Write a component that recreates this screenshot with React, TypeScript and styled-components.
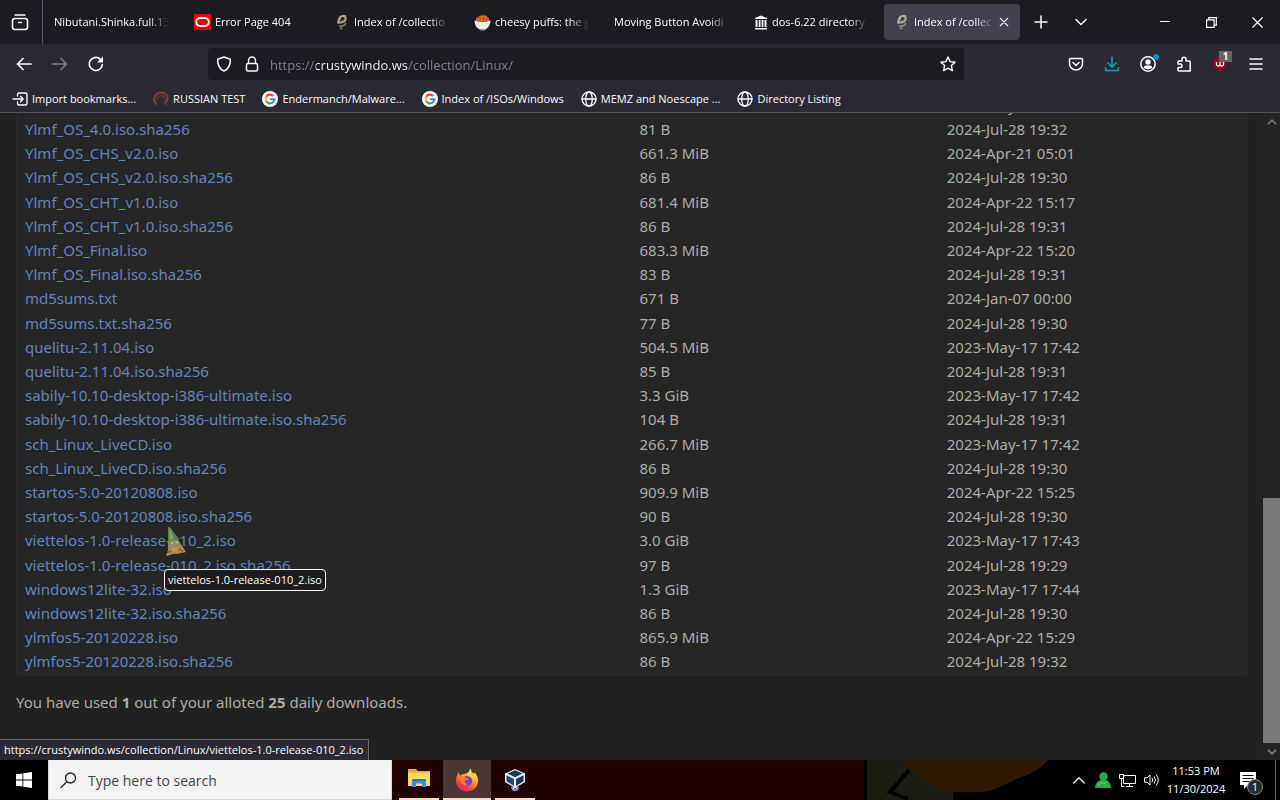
import React from "react";
import styled, { createGlobalStyle, css } from "styled-components";

const GlobalStyle = createGlobalStyle`
  * { box-sizing: border-box; }
  body {
    margin: 0;
    background: #212121;
    font-family: "Open Sans", "Noto Sans", sans-serif;
    font-size: 11px;
    color: #fbfbfe;
  }
  button {
    font: inherit;
    color: inherit;
    background: none;
    border: 0;
    padding: 0;
    margin: 0;
  }
  svg { display: block; flex: none; }
`;

const Desktop = styled.div`
  display: flex;
  flex-direction: column;
  height: 100vh;
  min-height: 400px;
`;

/* ---------- Browser chrome ---------- */

const TabBar = styled.header`
  flex: none;
  display: flex;
  height: 44px;
  background: #1c1b22;
`;

const FirefoxView = styled.button`
  width: 43px;
  display: grid;
  place-items: center;
  border-right: 1px solid #55545e;
  padding-right: 2px;
`;

const TabList = styled.nav`
  display: flex;
  flex: 0 1 auto;
  min-width: 0;
  gap: 4px;
  padding: 4px 1px;
`;

const Tab = styled.button<{ $active?: boolean }>`
  flex: 0 1 136px;
  width: 136px;
  min-width: 0;
  display: flex;
  align-items: center;
  gap: 4px;
  padding: 0 11px 0 10px;
  border-radius: 4px;
  text-align: left;
  ${(p) => p.$active && css`
    background: #42414d;
  `}
`;

const TabTitle = styled.span`
  flex: 1;
  min-width: 0;
  overflow: hidden;
  white-space: nowrap;
  line-height: 20px;
  mask-image: linear-gradient(to left, transparent, #000 20px);
`;

const ChromeButton = styled.button`
  width: 40px;
  display: grid;
  place-items: center;
`;

const WindowButtons = styled.div`
  display: flex;
  margin-left: auto;
`;

const WindowButton = styled.button`
  width: 46px;
  display: grid;
  place-items: center;
`;

const NavBar = styled.div`
  flex: none;
  display: flex;
  align-items: center;
  height: 40px;
  padding: 0 6px;
  background: #2b2a33;
`;

const ToolButton = styled.button<{ $dim?: boolean }>`
  position: relative;
  flex: none;
  width: 36px;
  height: 32px;
  display: grid;
  place-items: center;
  opacity: ${(p) => (p.$dim ? 0.4 : 1)};
`;

const Spring = styled.div`
  flex: 1 1 0;
`;

const UrlBar = styled.div`
  flex: 8 1 0;
  min-width: 0;
  display: flex;
  align-items: center;
  height: 32px;
  padding: 0 2px;
  border-radius: 4px;
  background: #1c1b22;
`;

const UrlIcon = styled.button`
  flex: none;
  width: 28px;
  height: 28px;
  display: grid;
  place-items: center;
`;

const UrlInput = styled.input`
  flex: 1;
  min-width: 0;
  height: 28px;
  margin-left: 4px;
  padding: 2px 0 0;
  border: 0;
  outline: 0;
  font: 13px "Open Sans", "Noto Sans", sans-serif;
  color: transparent;
  background: linear-gradient(to right, #85848c 46px, #fbfbfe 46px, #fbfbfe 138px, #85848c 138px);
  background-clip: text;
`;

const AccountDot = styled.span`
  position: absolute;
  top: 6px;
  right: 7px;
  width: 6px;
  height: 6px;
  border-radius: 50%;
  background: #0090d0;
`;

const BlockCount = styled.span`
  position: absolute;
  top: 3px;
  right: 6px;
  width: 13px;
  height: 11px;
  line-height: 11px;
  text-align: center;
  font-size: 10px;
  font-weight: 700;
  color: #fff;
  background: #666;
`;

const BookmarkBar = styled.nav`
  flex: none;
  display: flex;
  align-items: center;
  gap: 17px;
  height: 29px;
  padding: 2px 12px 0;
  border-bottom: 1px solid #52525e;
  background: #2b2a33;
`;

const Bookmark = styled.a`
  display: flex;
  align-items: center;
  gap: 4px;
  line-height: 20px;
  white-space: nowrap;
  color: inherit;
  text-decoration: none;
`;

/* ---------- Page ---------- */

const Viewport = styled.main`
  position: relative;
  flex: 1;
  min-height: 0;
  display: flex;
  background: #212121;
  font-family: "Noto Sans", "Open Sans", sans-serif;
`;

const Page = styled.div`
  flex: 1;
  min-width: 0;
  display: flex;
  flex-direction: column;
  justify-content: flex-end;
  overflow: hidden;
  padding: 0 16px 46px;
  font-size: 15px;
  color: #b0aca6;
`;

const Listing = styled.table`
  width: 100%;
  table-layout: fixed;
  border-collapse: separate;
  border-spacing: 0;
  border: 1px solid #2b2b2b;
  border-top: 0;
  background: #262626;
`;

const Row = styled.tr`
  height: 24px;
  line-height: 24px;
  &:nth-child(5n + 4) { height: 25px; }
`;

const Cell = styled.td<{ $wide?: boolean }>`
  width: ${(p) => (p.$wide ? "50%" : "25%")};
  padding: 0 8px;
  vertical-align: top;
  white-space: nowrap;
`;

const FileLink = styled.a`
  color: #6284bc;
  text-decoration: none;
`;

const Quota = styled.p`
  margin: 15px 0 0;
  line-height: 24px;
  strong { font-weight: 700; }
`;

const ScrollBar = styled.div`
  flex: none;
  width: 17px;
  display: flex;
  flex-direction: column;
  background: #232323;
`;

const ScrollArrow = styled.button`
  flex: none;
  height: 17px;
  display: grid;
  place-items: center;
  color: #777;
`;

const ScrollTrack = styled.div`
  flex: 1;
  display: flex;
  flex-direction: column;
  justify-content: flex-end;
`;

const ScrollThumb = styled.div`
  height: 40%;
  background: #787878;
`;

const StatusPanel = styled.div`
  position: absolute;
  left: 0;
  bottom: 0;
  height: 21px;
  padding: 0 5px 0 4px;
  line-height: 20px;
  font-family: "Open Sans", sans-serif;
  white-space: nowrap;
  border: 1px solid #6a6a70;
  border-width: 1px 1px 0 0;
  background: #2b2a33;
`;

const HoverAnchor = styled.span`
  position: relative;
`;

const Pointer = styled.svg`
  position: absolute;
  left: 140px;
  top: -3px;
`;

const Tooltip = styled.span`
  position: absolute;
  z-index: 1;
  left: 139px;
  top: 39px;
  height: 22px;
  padding: 0 3px;
  line-height: 20px;
  font-family: "Open Sans", sans-serif;
  font-size: 11px;
  color: #fff;
  white-space: nowrap;
  border: 1px solid #fff;
  border-radius: 4px;
  background: #1c1c1f;
`;

/* ---------- Taskbar ---------- */

const Taskbar = styled.footer`
  position: relative;
  flex: none;
  display: flex;
  height: 40px;
  background: #000;
  overflow: hidden;
`;

const StartButton = styled.button`
  flex: none;
  width: 48px;
  display: grid;
  place-items: center;
  background: #000;
`;

const SearchBox = styled.label`
  flex: 0 1 344px;
  display: flex;
  align-items: center;
  gap: 11px;
  padding: 0 11px;
  border: 1px solid #d8d6d6;
  border-top-color: #f3f2f2;
  background: #f3f2f2;
`;

const SearchInput = styled.input`
  flex: 1;
  min-width: 0;
  padding: 0;
  border: 0;
  outline: 0;
  background: none;
  font: 14px "Open Sans", "Noto Sans", sans-serif;
  color: #333;
  &::placeholder { color: #444; opacity: 1; }
`;

const Wallpaper = styled.div`
  flex: 1 1 0;
  min-width: 0;
  display: flex;
  background: #000;
`;

const AppStrip = styled.div`
  flex: 1;
  display: flex;
  padding-left: 3px;
  background: #200200;
`;

const AppButton = styled.button<{ $active?: boolean }>`
  flex: none;
  width: 48px;
  display: flex;
  flex-direction: column;
  align-items: center;
  justify-content: space-between;
  padding-top: 8px;
  background: ${(p) => (p.$active ? "#4a3635" : "transparent")};
  &::after {
    content: "";
    width: ${(p) => (p.$active ? "48px" : "40px")};
    height: 2px;
    background: #ffdcb8;
  }
`;

const WallpaperArt = styled.svg`
  flex: none;
`;

const Tray = styled.div`
  flex: none;
  display: flex;
  align-items: center;
  padding-right: 4px;
`;

const TrayButton = styled.button`
  width: 24px;
  height: 40px;
  display: grid;
  place-items: center;
`;

const Clock = styled.div`
  width: 66px;
  text-align: center;
  line-height: 18px;
  color: #fff;
`;

const ActionCenter = styled.button`
  position: relative;
  width: 47px;
  height: 40px;
  padding-left: 11px;
  display: flex;
  align-items: center;
  border-right: 1px solid #6a6a6a;
`;

const NoticeCount = styled.span`
  position: absolute;
  left: 18px;
  top: 19px;
  width: 16px;
  height: 16px;
  line-height: 14px;
  text-align: center;
  color: #fff;
  border: 1px solid #8a8a8a;
  border-radius: 50%;
  background: #2a2a2a;
`;

/* ---------- Icons ---------- */

const Stroke = ({ size = 16, width = 1.5, color = "currentColor", children }: {
  size?: number; width?: number; color?: string; children: React.ReactNode;
}) => (
  <svg width={size} height={size} viewBox="0 0 16 16" fill="none" stroke={color}
    strokeWidth={width} strokeLinecap="round" strokeLinejoin="round" aria-hidden="true">
    {children}
  </svg>
);

const OracleIcon = () => (
  <svg width="17" height="16" viewBox="0 0 17 16" aria-hidden="true">
    <rect width="17" height="16" fill="#e8000c" />
    <rect x="2.2" y="4" width="12.6" height="8" rx="4" fill="none" stroke="#fff" strokeWidth="1.9" />
  </svg>
);

const SnakeIcon = ({ gray }: { gray?: boolean }) => (
  <svg width="16" height="16" viewBox="0 0 16 16" fill="none" strokeLinecap="round" aria-hidden="true">
    <path d="M11 2.500C8 1.500 6 3 5.500 4.500S4 7 4.500 8.500" stroke={gray ? "#b5b3ab" : "#b3ab86"} strokeWidth="2.400" />
    <path d="M11.500 3.500C12.500 6 10.500 8 6 8.500" stroke={gray ? "#a5a39b" : "#a39b76"} strokeWidth="2.400" />
    <path d="M5.500 12C7.500 12.500 10 12 11.500 9.500M6.500 14.300h1.500" stroke={gray ? "#8b8984" : "#7d7858"} strokeWidth="1.700" />
    <path d="M7.500 5.500h2M8 3.500h1" stroke="#33322b" strokeWidth="1" />
  </svg>
);

const BowlIcon = () => (
  <svg width="17" height="17" viewBox="0 0 17 17" aria-hidden="true">
    <path d="M1.500 6C2 3.500 4 3.500 5 2.500 6.500.500 8.500 2 9.500 1.500 12 .500 12.500 2.500 14 3.500 15.500 4 15.500 6 15.500 7.500L2 8Z" fill="#e2661c" />
    <path d="M5 3l2 2M10 3l-1 3M13 4l-1 2" stroke="#8f3008" strokeWidth="1" />
    <path d="M.500 6.500Q8.500 9.500 16.500 6.500C16.500 11 14 14 11.500 15.500H5.500C3 14 .500 11 .500 6.500Z" fill="#f0ede8" />
    <path d="M5.500 15.500h6l-1 1h-4z" fill="#75b4bd" />
  </svg>
);

const ArchiveIcon = () => (
  <svg width="14" height="15" viewBox="0 0 14 15" fill="#f0f0f0" aria-hidden="true">
    <path d="M1 3 7 .500 13 3v1H1zM1.500 5h2v7h-2zM4.700 5h1.800v7H4.700zM7.600 5h1.800v7H7.600zM10.500 5h2v7h-2zM1 13h12v1.500H1z" />
  </svg>
);

const GoogleIcon = () => (
  <svg width="16" height="16" viewBox="0 0 16 16" fill="none" aria-hidden="true">
    <circle cx="8" cy="8" r="8" fill="#fff" />
    <g strokeWidth="2.100">
      <path d="M11.200 5A4.400 4.400 0 0 0 4.200 5.800" stroke="#ea4335" />
      <path d="M4.200 5.800A4.400 4.400 0 0 0 4.200 10.200" stroke="#fbbc05" />
      <path d="M4.200 10.200A4.400 4.400 0 0 0 11 11.200" stroke="#34a853" />
      <path d="M11 11.200A4.400 4.400 0 0 0 12.400 8.200H8.200" stroke="#4285f4" />
    </g>
  </svg>
);

const GlobeIcon = () => (
  <Stroke width={1.3}>
    <circle cx="8" cy="8" r="7" />
    <ellipse cx="8" cy="8" rx="3.300" ry="7" />
    <path d="M1 8h14" />
  </Stroke>
);

const HeadsetIcon = () => (
  <svg width="16" height="16" viewBox="0 0 16 16" fill="none" aria-hidden="true">
    <path d="M4 13.500C1.500 12 .800 9.500 1.500 6.500 2.500 3 5 1.500 8 1.500c4 0 6.500 3 6.500 6 0 2.500-1.500 4-3 4.500" stroke="#7c4038" strokeWidth="2" />
    <path d="M4.500 9c-.500-3 1-4.500 3.500-4.500S12 6 11.500 9M10 11l4.500 4" stroke="#5f3430" strokeWidth="1.600" />
  </svg>
);

const FolderIcon = () => (
  <svg width="22" height="20" viewBox="0 0 22 20" aria-hidden="true">
    <path d="M0 1h8l1.500 2H22v15H0z" fill="#e6a82e" />
    <path d="M0 4.500h22V18H0z" fill="#ffd868" />
    <path d="M4 19v-6q0-2 2-2h10q2 0 2 2v6h-4v-3.500H8V19z" fill="#3c8fdc" />
    <path d="M4 13q0-2 2-2h10q2 0 2 2z" fill="#2a72bd" />
  </svg>
);

const FirefoxIcon = () => (
  <svg width="24" height="24" viewBox="0 0 24 24" aria-hidden="true">
    <defs>
      <linearGradient id="fx-body" x1="0.800" y1="0.100" x2="0.250" y2="1">
        <stop offset="0" stopColor="#fff04a" />
        <stop offset="0.400" stopColor="#ff9a26" />
        <stop offset="0.700" stopColor="#ff4340" />
        <stop offset="1" stopColor="#ee1672" />
      </linearGradient>
    </defs>
    <path d="M3.500 4.500 5 7.500Q7 5.500 9.500 6 12 5.500 14 3.500 14.500 1.500 15.500.500 16 4 19 6q.500-1 .300-2Q23.500 8.500 23 13.500C22.500 19.500 18 23.500 12 23.500S1 19 1 13C1 9.500 2 7 3.500 4.500Z" fill="url(#fx-body)" />
    <circle cx="12.300" cy="12.700" r="5" fill="#7a42d8" />
    <path d="M5.500 9.500Q8.500 7.500 11 10 13.500 9.500 13 11.500L10 12.500Q9 15.500 12.500 16.500 7 18.500 5.500 13Z" fill="#ff7a2b" />
    <path d="M13.500 4.500Q20 8 18.500 14 17 8.500 12 8 13.500 6.500 13.500 4.500Z" fill="#ffcf3d" />
  </svg>
);

const VirtualBoxIcon = () => (
  <svg width="22" height="24" viewBox="0 0 22 24" aria-hidden="true">
    <path d="M11 1 21 5.500V14l-10 6L1 14V5.500Z" fill="#e6eef6" />
    <path d="m11 2.300 7.500 3.300L11 9.300 3.500 5.600Z" fill="#16395e" />
    <path d="M2.500 7.300 10 11v7L2.500 13.300Z" fill="#1d4a75" />
    <path d="M19.500 7.300 12 11v7l7.500-4.700Z" fill="#143450" />
    <path d="M7 19h8l-1.500 3.500h-5z" fill="#c8cbe0" />
    <path d="m8 19 2 4 1-3 1 3 2-4" fill="none" stroke="#6c79b4" />
  </svg>
);

const GnomePointer = () => (
  <Pointer width="22" height="32" viewBox="0 0 22 32" aria-hidden="true">
    <path d="M3 0 6 1 14 13 13 18H3Z" fill="#5c7f52" />
    <path d="M4 1 9 11 5 13Z" fill="#86a472" />
    <path d="M3 15Q8 11 14 14L17 20 12 25H3Z" fill="#8a9060" />
    <path d="M6 16h2M11 15.500h2" stroke="#c9cba4" strokeWidth="1.600" />
    <path d="M1 28 4 21 9 22 16 17 21 25 12 27 8 27 2 29Z" fill="#b08355" />
    <path d="M6 20Q9 22 13 19L12 24 7 25Z" fill="#a99a64" />
    <path d="M2 26 6 24M14 22l4 2" stroke="#6b5434" strokeWidth="1.200" />
  </Pointer>
);

/* ---------- Data ---------- */

const tabs: { title: string; icon?: React.ReactNode; active?: boolean }[] = [
  { title: "Nibutani.Shinka.full.13" },
  { title: "Error Page 404", icon: <OracleIcon /> },
  { title: "Index of /collectio", icon: <SnakeIcon /> },
  { title: "cheesy puffs: the g", icon: <BowlIcon /> },
  { title: "Moving Button Avoidi" },
  { title: "dos-6.22 directory", icon: <ArchiveIcon /> },
  { title: "Index of /collec", icon: <SnakeIcon gray />, active: true },
];

const files: [string, string, string][] = [
  ["Ylmf_OS_4.0.iso", "683.3 MiB", "2023-May-17 17:42"],
  ["Ylmf_OS_4.0.iso.sha256", "81 B", "2024-Jul-28 19:32"],
  ["Ylmf_OS_CHS_v2.0.iso", "661.3 MiB", "2024-Apr-21 05:01"],
  ["Ylmf_OS_CHS_v2.0.iso.sha256", "86 B", "2024-Jul-28 19:30"],
  ["Ylmf_OS_CHT_v1.0.iso", "681.4 MiB", "2024-Apr-22 15:17"],
  ["Ylmf_OS_CHT_v1.0.iso.sha256", "86 B", "2024-Jul-28 19:31"],
  ["Ylmf_OS_Final.iso", "683.3 MiB", "2024-Apr-22 15:20"],
  ["Ylmf_OS_Final.iso.sha256", "83 B", "2024-Jul-28 19:31"],
  ["md5sums.txt", "671 B", "2024-Jan-07 00:00"],
  ["md5sums.txt.sha256", "77 B", "2024-Jul-28 19:30"],
  ["quelitu-2.11.04.iso", "504.5 MiB", "2023-May-17 17:42"],
  ["quelitu-2.11.04.iso.sha256", "85 B", "2024-Jul-28 19:31"],
  ["sabily-10.10-desktop-i386-ultimate.iso", "3.3 GiB", "2023-May-17 17:42"],
  ["sabily-10.10-desktop-i386-ultimate.iso.sha256", "104 B", "2024-Jul-28 19:31"],
  ["sch_Linux_LiveCD.iso", "266.7 MiB", "2023-May-17 17:42"],
  ["sch_Linux_LiveCD.iso.sha256", "86 B", "2024-Jul-28 19:30"],
  ["startos-5.0-20120808.iso", "909.9 MiB", "2024-Apr-22 15:25"],
  ["startos-5.0-20120808.iso.sha256", "90 B", "2024-Jul-28 19:30"],
  ["viettelos-1.0-release-010_2.iso", "3.0 GiB", "2023-May-17 17:43"],
  ["viettelos-1.0-release-010_2.iso.sha256", "97 B", "2024-Jul-28 19:29"],
  ["windows12lite-32.iso", "1.3 GiB", "2023-May-17 17:44"],
  ["windows12lite-32.iso.sha256", "86 B", "2024-Jul-28 19:30"],
  ["ylmfos5-20120228.iso", "865.9 MiB", "2024-Apr-22 15:29"],
  ["ylmfos5-20120228.iso.sha256", "86 B", "2024-Jul-28 19:32"],
];

const hovered = "viettelos-1.0-release-010_2.iso";

const bookmarks: [string, React.ReactNode][] = [
  ["Import bookmarks...", (
    <Stroke width={1.4}><path d="M5.500 5V3.500Q5.500 2 7 2h6.500Q15 2 15 3.500v9q0 1.500-1.500 1.500H7q-1.500 0-1.500-1.500V11M1 8h10M8.500 5.300 11.200 8l-2.700 2.700" /></Stroke>
  )],
  ["RUSSIAN TEST", <HeadsetIcon />],
  ["Endermanch/Malware...", <GoogleIcon />],
  ["Index of /ISOs/Windows", <GoogleIcon />],
  ["MEMZ and Noescape ...", <GlobeIcon />],
  ["Directory Listing", <GlobeIcon />],
];

export default function App() {
  return (
    <Desktop>
      <GlobalStyle />
      <TabBar>
        <FirefoxView aria-label="Firefox View">
          <svg width="18" height="18" viewBox="0 0 18 18" fill="none" stroke="#fbfbfe" strokeWidth="1.600" strokeLinecap="round" aria-hidden="true">
            <rect x="1.500" y="5.500" width="15" height="11" rx="2.500" />
            <path d="M4 2h10M7.500 9.500h3" />
          </svg>
        </FirefoxView>
        <TabList aria-label="Tabs">
          {tabs.map((t, i) => (
            <Tab key={i} $active={t.active}>
              {t.icon}
              <TabTitle>{t.title}</TabTitle>
              {t.active && <Stroke size={10} width={1.8}><path d="M2 2l12 12M14 2L2 14" /></Stroke>}
            </Tab>
          ))}
        </TabList>
        <ChromeButton aria-label="New tab">
          <Stroke><path d="M8 2v12M2 8h12" /></Stroke>
        </ChromeButton>
        <ChromeButton aria-label="List all tabs">
          <Stroke><path d="M3 5.500l5 5 5-5" /></Stroke>
        </ChromeButton>
        <WindowButtons>
          <WindowButton aria-label="Minimize">
            <svg width="10" height="10" stroke="#fff" aria-hidden="true"><path d="M0 4.500h10" /></svg>
          </WindowButton>
          <WindowButton aria-label="Restore">
            <svg width="11" height="11" fill="none" stroke="#fff" strokeWidth="1.200" aria-hidden="true"><path d="M.600 2.800h7.500v7.500H.600zM2.800 2.800V.600h7.500v7.500H8.100" /></svg>
          </WindowButton>
          <WindowButton aria-label="Close">
            <svg width="11" height="11" stroke="#fff" strokeWidth="1.200" aria-hidden="true"><path d="M.500.500l10 10M10.500.500l-10 10" /></svg>
          </WindowButton>
        </WindowButtons>
      </TabBar>

      <NavBar>
        <ToolButton aria-label="Back"><Stroke width={1.7}><path d="M15 8H1.500M7 2.500 1.500 8 7 13.500" /></Stroke></ToolButton>
        <ToolButton aria-label="Forward" $dim><Stroke width={1.7}><path d="M1 8h13.500M9 2.500 14.500 8 9 13.500" /></Stroke></ToolButton>
        <ToolButton aria-label="Reload">
          <svg width="16" height="16" viewBox="0 0 16 16" fill="none" aria-hidden="true">
            <path d="M14.300 8.500A6.500 6.500 0 1 1 12 3" stroke="#fbfbfe" strokeWidth="1.700" strokeLinecap="round" />
            <path d="M15 .500V6.500H9Z" fill="#fbfbfe" />
          </svg>
        </ToolButton>
        <Spring />
        <UrlBar>
          <UrlIcon aria-label="Tracking protection"><Stroke><path d="M8 1 14.300 3.300C14.500 8.500 12.500 13 8 15.200 3.500 13 1.500 8.500 1.700 3.300Z" /></Stroke></UrlIcon>
          <UrlIcon aria-label="Site information"><Stroke><rect x="2.500" y="7.500" width="11" height="7.500" rx="1.500" /><path d="M4.500 7V4.500a3.500 3.500 0 0 1 7 0V7" /></Stroke></UrlIcon>
          <UrlInput aria-label="Address" defaultValue="https://crustywindo.ws/collection/Linux/" />
          <UrlIcon aria-label="Bookmark this page"><Stroke width={1.4}><path d="M8 1l2.100 4.600 5 .600-3.700 3.400 1 5L8 12.100 3.600 14.600l1-5L.900 6.200l5-.600Z" /></Stroke></UrlIcon>
        </UrlBar>
        <Spring />
        <ToolButton aria-label="Save to Pocket"><Stroke><path d="M2.500 2.500h11q1 0 1 1V7.500a6.500 6.500 0 0 1-13 0V3.500q0-1 1-1ZM5 6.500l3 3 3-3" /></Stroke></ToolButton>
        <ToolButton aria-label="Downloads"><Stroke color="#00a8c4"><path d="M8 1v9.500M4 7l4 4 4-4M1.500 11.500V13q0 1.500 1.500 1.500h10q1.500 0 1.500-1.500v-1.500" /></Stroke></ToolButton>
        <ToolButton aria-label="Account">
          <svg width="16" height="16" viewBox="0 0 16 16" fill="#fbfbfe" aria-hidden="true">
            <circle cx="8" cy="8" r="7.200" fill="none" stroke="#fbfbfe" strokeWidth="1.500" />
            <circle cx="8" cy="6" r="2.700" />
            <path d="M3.500 11.500Q4 9.500 6 9.500h4q2 0 2.500 2A6 6 0 0 1 8 13.300a6 6 0 0 1-4.500-1.800Z" />
          </svg>
          <AccountDot />
        </ToolButton>
        <ToolButton aria-label="Extensions"><Stroke><path d="M6 5V3.200a2 2 0 0 1 4 0V5h3.200q1 0 1 1v9H3q-1 0-1-1v-2.500h2.200a1.800 1.800 0 0 0 0-3.600H2V6q0-1 1-1Z" /></Stroke></ToolButton>
        <ToolButton aria-label="uBlock Origin">
          <svg width="16" height="16" viewBox="0 0 16 16" aria-hidden="true">
            <path d="M8 .500 14.500 3C14.500 9 13 13 8 15.500 3 13 1.500 9 1.500 3Z" fill="#a00016" />
            <path d="M4.500 6v2.500q0 1.500 1.700 1.500T8 8.500V6M8 8.500Q8 10 9.700 10t1.800-1.500V6" fill="none" stroke="#fff" strokeWidth="1.300" />
          </svg>
          <BlockCount>1</BlockCount>
        </ToolButton>
        <ToolButton aria-label="Menu"><Stroke><path d="M2 3h12M2 8h12M2 13h12" /></Stroke></ToolButton>
      </NavBar>

      <BookmarkBar aria-label="Bookmarks">
        {bookmarks.map(([label, icon]) => (
          <Bookmark key={label} href="#">{icon}{label}</Bookmark>
        ))}
      </BookmarkBar>

      <Viewport>
        <Page>
          <Listing>
            <tbody>
              {files.map(([name, size, date]) => (
                <Row key={name}>
                  <Cell $wide>
                    {name === hovered ? (
                      <HoverAnchor>
                        <FileLink href="#">{name}</FileLink>
                        <GnomePointer />
                        <Tooltip role="tooltip">{name}</Tooltip>
                      </HoverAnchor>
                    ) : (
                      <FileLink href="#">{name}</FileLink>
                    )}
                  </Cell>
                  <Cell>{size}</Cell>
                  <Cell>{date}</Cell>
                </Row>
              ))}
            </tbody>
          </Listing>
          <Quota>
            You have used <strong>1</strong> out of your alloted <strong>25</strong> daily downloads.
          </Quota>
        </Page>
        <ScrollBar>
          <ScrollArrow aria-label="Scroll up"><Stroke size={10} width={2.5}><path d="M2 11l6-6 6 6" /></Stroke></ScrollArrow>
          <ScrollTrack><ScrollThumb /></ScrollTrack>
          <ScrollArrow aria-label="Scroll down"><Stroke size={10} width={2.5}><path d="M2 5l6 6 6-6" /></Stroke></ScrollArrow>
        </ScrollBar>
        <StatusPanel>https://crustywindo.ws/collection/Linux/viettelos-1.0-release-010_2.iso</StatusPanel>
      </Viewport>

      <Taskbar>
        <StartButton aria-label="Start">
          <svg width="16" height="16" viewBox="0 0 16 16" fill="#fff" aria-hidden="true">
            <path d="M0 2.300 6.500 1.400V7.600H0zM7.300 1.300 16 0v7.600H7.300zM0 8.400h6.500v6.200L0 13.700zM7.300 8.400H16V16l-8.700-1.300z" />
          </svg>
        </StartButton>
        <SearchBox>
          <svg width="17" height="17" viewBox="0 0 17 17" fill="none" stroke="#222" strokeWidth="1.300" aria-hidden="true">
            <circle cx="10.500" cy="6" r="5" />
            <path d="M7 9.500.500 16" />
          </svg>
          <SearchInput aria-label="Search" placeholder="Type here to search" />
        </SearchBox>
        <Wallpaper>
          <AppStrip>
            <AppButton aria-label="File Explorer"><FolderIcon /></AppButton>
            <AppButton aria-label="Firefox" $active><FirefoxIcon /></AppButton>
            <AppButton aria-label="VirtualBox"><VirtualBoxIcon /></AppButton>
          </AppStrip>
          <WallpaperArt width="203" height="40" viewBox="0 0 203 40" aria-hidden="true">
            <rect width="203" height="40" fill="#000" />
            <path d="M3 0H48L58 13 88 29 90 40H3Z" fill="#1b1d13" />
            <path d="M38 0H184C176 10 166 14 150 20 136 27 130 31 116 32H88C76 31 66 25 54 15 48 10 42 5 38 0Z" fill="#2e1a02" />
            <path d="M45 10 26 32 44 39" fill="none" stroke="#000" strokeWidth="4" />
          </WallpaperArt>
        </Wallpaper>
        <Tray>
          <TrayButton aria-label="Show hidden icons"><Stroke size={12} width={1.6}><path d="M1 12l7-7 7 7" /></Stroke></TrayButton>
          <TrayButton aria-label="User status">
            <svg width="16" height="16" viewBox="0 0 16 16" fill="#2bab49" aria-hidden="true">
              <circle cx="8.500" cy="4.500" r="4.200" />
              <path d="M0 16Q0 10 6 8h5q5 2 5 8Z" />
              <path d="M3 13q3-3 8-2" stroke="#6ad47e" fill="none" />
            </svg>
          </TrayButton>
          <TrayButton aria-label="Network">
            <svg width="17" height="15" viewBox="0 0 17 15" fill="none" stroke="#fff" aria-hidden="true">
              <path d="M4.500 2.500h12v8h-12zM10.500 10.500v3M7 13.500h7M.500 1.500h4v4h-4zM2.500 5.500v8h3" />
            </svg>
          </TrayButton>
          <TrayButton aria-label="Volume">
            <svg width="15" height="14" viewBox="0 0 15 14" fill="none" stroke="#fff" aria-hidden="true">
              <path d="M.500 4.800H3L6 2v10L3 9.200H.500zM8 4.800q1.500 2.200 0 4.400M10 3.300q3 3.700 0 7.400M12 1.500q4.500 5.500 0 11" />
            </svg>
          </TrayButton>
          <Clock>
            <div>11:53 PM</div>
            <div>11/30/2024</div>
          </Clock>
          <ActionCenter aria-label="Notifications">
            <svg width="17" height="17" viewBox="0 0 17 17" aria-hidden="true">
              <path d="M0 0h16v13H8l-4 4v-4H0z" fill="#fff" />
              <path d="M2.500 3.500h11M2.500 6.500h11M2.500 9.500h7" stroke="#000" />
            </svg>
            <NoticeCount>1</NoticeCount>
          </ActionCenter>
        </Tray>
      </Taskbar>
    </Desktop>
  );
}
